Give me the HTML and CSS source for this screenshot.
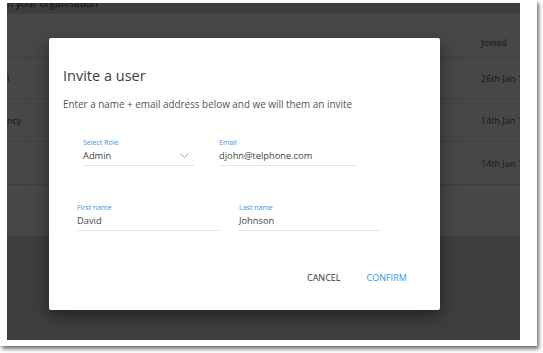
FILE: index.html
```html
<!DOCTYPE html>
<html>
<head>
<meta charset="utf-8">
<link rel="stylesheet" href="styles.css">
</head>
<body>
<div class="shot">
  <div class="screen">
    <div class="page">
      <div class="page-title">n your organisation</div>
      <div class="card">
        <div class="row head"><span class="c1"></span><span class="c2 h">Joined</span></div>
        <div class="row r-a"><span class="c1">l</span><span class="c2">26th Jan 18</span></div>
        <div class="row r-b"><span class="c1">ncy</span><span class="c2">14th Jan 18</span></div>
        <div class="row r-b"><span class="c1"></span><span class="c2">14th Jan 18</span></div>
        <div class="row last"><span class="c1"></span><span class="c2"></span></div>
      </div>
    </div>
    <div class="overlay">
      <div class="modal">
        <h1 class="title">Invite a user</h1>
        <p class="sub">Enter a name + email address below and we will them an invite</p>
        <div class="frow r1">
          <div class="field f-role">
            <div class="lbl">Select Role</div>
            <div class="val">Admin
              <svg class="chev" width="9" height="5" viewBox="0 0 9 5"><path d="M0.5 0.5 L4.5 4.3 L8.5 0.5" fill="none" stroke="#9a9a9a" stroke-width="0.9"/></svg>
            </div>
          </div>
          <div class="field f-email">
            <div class="lbl">Email</div>
            <div class="val">djohn@telphone.com</div>
          </div>
        </div>
        <div class="frow r2">
          <div class="field f-first">
            <div class="lbl">First name</div>
            <div class="val">David</div>
          </div>
          <div class="field f-last">
            <div class="lbl">Last name</div>
            <div class="val">Johnson</div>
          </div>
        </div>
        <div class="actions">
          <span class="btn cancel">CANCEL</span>
          <span class="btn confirm">CONFIRM</span>
        </div>
      </div>
    </div>
  </div>
</div>
</body>
</html>
```
FILE: styles.css
```css
html, body {
  margin: 0;
  padding: 0;
  background: #ffffff;
  width: 543px;
  height: 353px;
  overflow: hidden;
  font-family: "Open Sans", "Noto Sans", sans-serif;
}
.shot {
  width: 537px;
  height: 346px;
  background: #ffffff;
  box-shadow: 2px 3px 4px rgba(0,0,0,0.55), 0 0 2px rgba(0,0,0,0.15);
  padding: 3px 17px 6px 7px;
  box-sizing: border-box;
}
.screen {
  position: relative;
  width: 513px;
  height: 337px;
  overflow: hidden;
  background: #dfdfdf;
}
.page-title {
  font-size: 10px;
  line-height: 10px;
  color: #333;
  margin-top: -5px;
  height: 10px;
}
.card {
  margin-top: 6px;
  background: #ffffff;
}
.row {
  display: flex;
  align-items: center;
  justify-content: space-between;
  border-bottom: 1px solid #e2e2e2;
  font-size: 9px;
  color: #555;
}
.row.head {
  height: 44px;
  align-items: flex-end;
  box-sizing: border-box;
  padding-bottom: 9px;
  font-size: 8.5px;
  font-weight: 600;
  color: #777;
}
.r-a { height: 40px; }
.r-b { height: 42px; }
.row.last { border-bottom: none; height: 51px; }
.c2 { width: 39px; white-space: nowrap; }
.overlay {
  position: absolute;
  inset: 0;
  background: rgba(0,0,0,0.72);
  padding: 35px 0 0 42px;
}
.modal {
  width: 391px;
  height: 272px;
  box-sizing: border-box;
  background: #ffffff;
  border-radius: 2px;
  box-shadow: 0 6px 16px rgba(0,0,0,0.45);
  padding: 28px 0 0 14px;
  display: flex;
  flex-direction: column;
}
.title {
  margin: 0;
  font-size: 14.5px;
  line-height: 20px;
  font-weight: 400;
  color: #3c3c3c;
}
.sub {
  margin: 11px 0 0 0;
  font-size: 9.9px;
  line-height: 14px;
  color: #555;
}
.frow { display: flex; }
.r1 { margin-top: 27px; padding-left: 20px; gap: 25px; }
.r2 { margin-top: 37px; padding-left: 14px; gap: 19px; }
.field {
  border-bottom: 1px solid #e4e4e4;
  padding-bottom: 2px;
}
.f-role { width: 111px; }
.f-email { width: 138px; }
.f-first { width: 143px; }
.f-last { width: 142px; }
.lbl {
  font-size: 7px;
  line-height: 10px;
  color: #3a94e6;
}
.val {
  margin-top: 1px;
  font-size: 9.3px;
  line-height: 14px;
  color: #444;
  display: flex;
  align-items: center;
  justify-content: space-between;
}
.chev { margin-right: 5px; margin-top: -1px; }
.actions {
  margin-top: 41px;
  display: flex;
  padding-left: 244px;
  gap: 26px;
}
.btn {
  font-size: 9px;
  line-height: 12px;
}
.cancel { color: #333; }
.confirm { color: #3a94e6; }
```
